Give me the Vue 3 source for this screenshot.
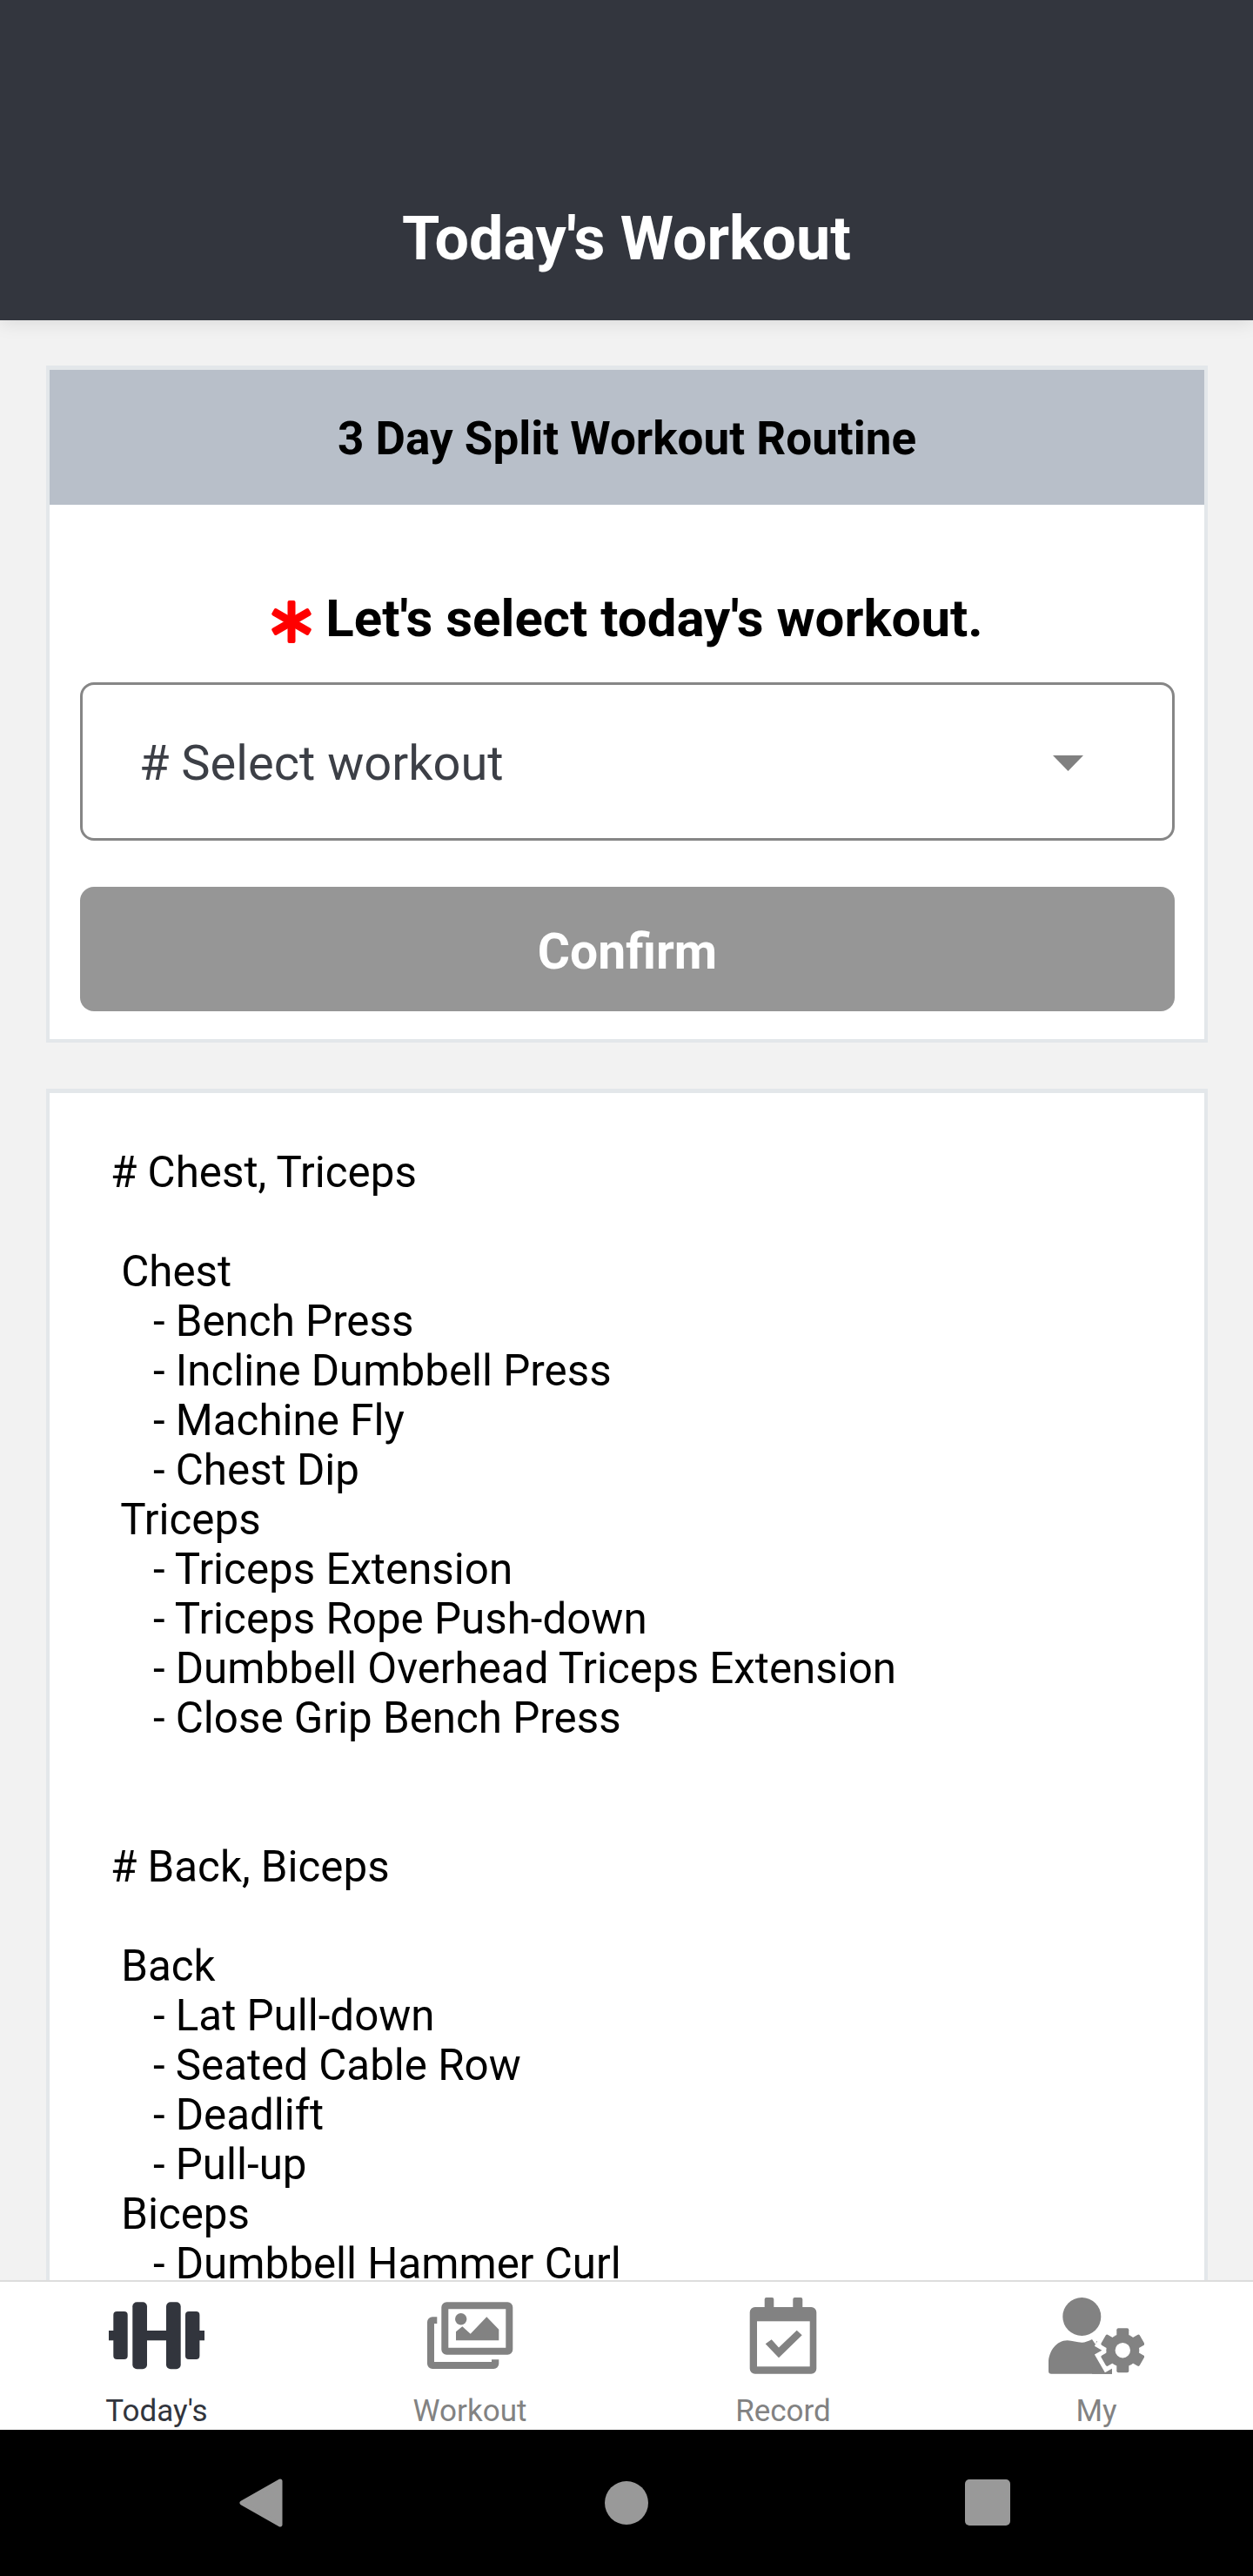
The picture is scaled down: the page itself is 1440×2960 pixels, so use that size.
<script setup>
const workoutText = `# Chest, Triceps

 Chest
    - Bench Press
    - Incline Dumbbell Press
    - Machine Fly
    - Chest Dip
 Triceps
    - Triceps Extension
    - Triceps Rope Push-down
    - Dumbbell Overhead Triceps Extension
    - Close Grip Bench Press


# Back, Biceps

 Back
    - Lat Pull-down
    - Seated Cable Row
    - Deadlift
    - Pull-up
 Biceps
    - Dumbbell Hammer Curl`
</script>

<template>
  <div class="screen">
    <header class="topbar">
      <h1 class="title">Today's Workout</h1>
    </header>

    <main class="content">
      <section class="card">
        <div class="band">3 Day Split Workout Routine</div>
        <div class="form">
          <div class="prompt">
            <svg class="star" viewBox="0 0 46 49" aria-hidden="true">
              <g fill="#ff0000" transform="translate(23 24.5)">
                <rect x="-4.5" y="-24.5" width="9" height="49" rx="2" />
                <rect x="-4.5" y="-24.5" width="9" height="49" rx="2" transform="rotate(60)" />
                <rect x="-4.5" y="-24.5" width="9" height="49" rx="2" transform="rotate(120)" />
              </g>
            </svg>
            <span>Let's select today's workout.</span>
          </div>
          <div class="select">
            <span># Select workout</span>
            <svg class="caret" viewBox="0 0 35 18" aria-hidden="true">
              <path d="M0 0H35L17.5 18Z" fill="#808080" />
            </svg>
          </div>
          <button class="confirm" type="button">Confirm</button>
        </div>
      </section>

      <section class="card notes">
        <pre class="plan">{{ workoutText }}</pre>
      </section>
    </main>

    <nav class="tabs">
      <div class="tab active">
        <svg class="tab-icon" viewBox="0 0 110 88" aria-hidden="true">
          <g fill="#32353d">
            <rect x="0" y="38" width="6" height="11.3" />
            <rect x="44" y="38" width="22" height="11.3" />
            <rect x="104" y="38" width="6" height="11.3" />
            <rect x="5.3" y="16" width="16.4" height="55" rx="4" />
            <rect x="27.3" y="5.3" width="16.7" height="77" rx="5" />
            <rect x="66" y="5.3" width="16.7" height="77" rx="5" />
            <rect x="88" y="16" width="16.4" height="55" rx="4" />
          </g>
        </svg>
        <span class="tab-label">Today's</span>
      </div>
      <div class="tab">
        <svg class="tab-icon" viewBox="0 0 110 88" aria-hidden="true">
          <g fill="#828282">
            <path fill-rule="evenodd" d="M28.3 5.3H98.3a6 6 0 0 1 6 6V59.7a6 6 0 0 1-6 6H28.3a6 6 0 0 1-6-6V11.3a6 6 0 0 1 6-6ZM30.3 13.3V57.7H96.3V13.3Z" />
            <path d="M17.3 22.3H12a6 6 0 0 0-6 6V76a6 6 0 0 0 6 6H82.3a6 6 0 0 0 6-6V71.3H80V74H14V30H17.3Z" />
            <circle cx="44.7" cy="24.7" r="6.7" />
            <path d="M39 49.3V39.3L46.3 33.3L55.7 41.7L74.3 22.3L88.3 36.7V49.3Z" />
          </g>
        </svg>
        <span class="tab-label">Workout</span>
      </div>
      <div class="tab">
        <svg class="tab-icon" viewBox="0 0 110 88" aria-hidden="true">
          <g fill="#828282">
            <path d="M35.7 0H42.3a2 2 0 0 1 2 2V11H66.3V2a2 2 0 0 1 2-2H75.3a2 2 0 0 1 2 2V11H87.3a6 6 0 0 1 6 6V81.7a6 6 0 0 1-6 6H22.7a6 6 0 0 1-6-6V17a6 6 0 0 1 6-6H33.7V2a2 2 0 0 1 2-2Z" />
            <rect x="25" y="27.3" width="60.7" height="52" fill="#fff" />
            <path d="M34.7 53.3L41.7 48.3L50 57.5L70.7 37.7L76.7 43.3L50 69.3Z" />
          </g>
        </svg>
        <span class="tab-label">Record</span>
      </div>
      <div class="tab">
        <svg class="tab-icon" viewBox="0 0 110 88" aria-hidden="true">
          <g fill="#828282">
            <circle cx="38.3" cy="22" r="22" />
            <path d="M3.3 87.7H73V82L50 48C46 50 42 51.7 38.3 51.7C33 51.7 27 49.3 21.7 49.3C9 49.3 0 62 0 75V84.4A3.3 3.3 0 0 0 3.3 87.7Z" />
            <path d="M55 50L73 60V87.7H50Z" />
          </g>
          <g transform="translate(85.3 60.7)">
            <g fill="#fff" stroke="#fff" stroke-width="10">
              <circle r="19" />
              <rect x="-7" y="-25.5" width="14" height="51" />
              <rect x="-7" y="-25.5" width="14" height="51" transform="rotate(60)" />
              <rect x="-7" y="-25.5" width="14" height="51" transform="rotate(120)" />
            </g>
            <g fill="#828282">
              <circle r="19" />
              <rect x="-7" y="-25.5" width="14" height="51" rx="2" />
              <rect x="-7" y="-25.5" width="14" height="51" rx="2" transform="rotate(60)" />
              <rect x="-7" y="-25.5" width="14" height="51" rx="2" transform="rotate(120)" />
            </g>
            <circle r="8.7" fill="#fff" />
          </g>
        </svg>
        <span class="tab-label">My</span>
      </div>
    </nav>

    <div class="system">
      <svg class="sys-back" viewBox="0 0 50 56" aria-hidden="true">
        <path d="M47 3L3 28L47 53Z" fill="#999" stroke="#999" stroke-width="5" stroke-linejoin="round" />
      </svg>
      <span class="sys-home"></span>
      <span class="sys-recent"></span>
    </div>
  </div>
</template>

<style>
html, body { margin: 0; padding: 0; }
</style>

<style scoped>
.screen {
  width: 1440px;
  height: 2960px;
  display: flex;
  flex-direction: column;
  overflow: hidden;
  background: #f2f2f2;
  font-family: Roboto, "Liberation Sans", sans-serif;
}
.topbar {
  position: relative;
  z-index: 1;
  flex: none;
  height: 368px;
  box-sizing: border-box;
  padding-top: 234px;
  background: #33363e;
  box-shadow: 0 3px 20px rgba(0, 0, 0, 0.1);
}
.title {
  margin: 0;
  color: #fff;
  font-size: 70px;
  line-height: 80px;
  font-weight: 700;
  text-align: center;
}
.content {
  flex: 1;
  min-height: 0;
  overflow: hidden;
  box-sizing: border-box;
  padding: 52px 52px 0 53px;
  display: flex;
  flex-direction: column;
  gap: 53px;
}
.card {
  flex: none;
  box-sizing: border-box;
  background: #fff;
  border: 4px solid #e3e7ea;
  border-top-width: 5px;
}
.band {
  height: 155px;
  padding-top: 2px;
  box-sizing: border-box;
  display: flex;
  align-items: center;
  justify-content: center;
  background: #b8bfc9;
  color: #000;
  font-size: 53px;
  font-weight: 700;
}
.form {
  padding: 94px 34px 32px 35px;
  display: flex;
  flex-direction: column;
}
.prompt {
  height: 72px;
  margin-bottom: 38px;
  display: flex;
  align-items: center;
  justify-content: center;
  gap: 16px;
  color: #000;
  font-size: 60px;
  font-weight: 700;
}
.star {
  width: 46px;
  height: 49px;
  margin-top: 8px;
}
.select {
  height: 182px;
  box-sizing: border-box;
  border: 3px solid #868686;
  border-radius: 16px;
  padding: 4px 102px 0 65px;
  display: flex;
  align-items: center;
  justify-content: space-between;
  color: #3c3f46;
  font-size: 56px;
}
.caret {
  width: 35px;
  height: 18px;
}
.confirm {
  margin-top: 53px;
  height: 143px;
  padding: 6px 0 0;
  border: 0;
  border-radius: 16px;
  background: #969696;
  color: #fff;
  font-family: inherit;
  font-size: 57px;
  font-weight: 700;
}
.notes {
  padding: 63px 70px 0;
}
.plan {
  margin: 0;
  color: #000;
  font-family: inherit;
  font-size: 49.3px;
  line-height: 57px;
  white-space: pre;
}
.tabs {
  position: relative;
  z-index: 1;
  flex: none;
  height: 172px;
  box-sizing: border-box;
  border-top: 2px solid #dddddd;
  background: #fff;
  display: grid;
  grid-template-columns: repeat(4, 1fr);
  overflow: hidden;
}
.tab {
  display: flex;
  flex-direction: column;
  align-items: center;
  padding-top: 18px;
  color: #828282;
}
.tab.active {
  color: #32353d;
}
.tab-icon {
  width: 110px;
  height: 88px;
}
.tab-label {
  margin-top: 22px;
  font-size: 35px;
  line-height: 42px;
}
.system {
  flex: none;
  height: 168px;
  box-sizing: border-box;
  background: #000;
  padding: 56px 0 0 275px;
  display: flex;
  align-items: flex-start;
}
.sys-back {
  width: 50px;
  height: 56px;
}
.sys-home {
  width: 50px;
  height: 50px;
  margin: 3px 0 0 370px;
  border-radius: 50%;
  background: #999;
}
.sys-recent {
  width: 52px;
  height: 53px;
  margin: 1px 0 0 364px;
  border-radius: 5px;
  background: #999;
}
</style>
